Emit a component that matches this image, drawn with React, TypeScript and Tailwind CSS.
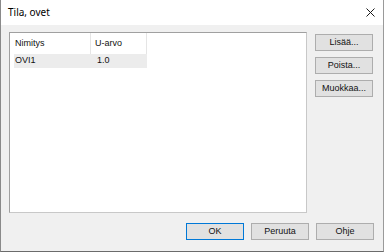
const font = { fontFamily: '"Noto Sans", "Liberation Sans", sans-serif' };
const uiFont = { fontFamily: '"Liberation Sans", Arial, sans-serif' };

function DlgButton({ label, primary }: { label: string; primary?: boolean }) {
  return (
    <button
      className={`w-[58px] h-[17px] flex items-center justify-center bg-[#e1e1e1] text-[9px] text-[#111] leading-none ${
        primary ? "border border-[#0078d7]" : "border border-[#adadad]"
      }`}
      style={uiFont}
    >
      {label}
    </button>
  );
}

export default function App() {
  return (
    <div
      className="w-[384px] h-[252px] flex flex-col border-l border-r border-b border-l-[#8a8a8a] border-r-[#9a9a9a] border-b-[#6b6b6b] bg-[#f0f0f0] overflow-hidden"
      style={font}
    >
      {/* Otsikkopalkki */}
      <div className="h-[25px] bg-white flex items-center justify-between pl-[7px] pr-[7px] shrink-0">
        <span className="text-[10px] text-black">Tila, ovet</span>
        <svg width="9" height="9" viewBox="0 0 9 9" className="mr-[1px]">
          <path d="M0.5 0.5 L8.5 8.5 M8.5 0.5 L0.5 8.5" stroke="#1a1a1a" strokeWidth="1" />
        </svg>
      </div>

      {/* Sisältö */}
      <div className="flex-1 flex flex-col pl-[8px] pr-[9px] pt-[7px] pb-[9px]">
        <div className="flex gap-[8px]">
          <div
            className="w-[298px] h-[181px] bg-white border border-t-[#a0a0a0] border-l-[#a0a0a0] border-r-[#c8c8c8] border-b-[#c8c8c8] pl-[4px]"
            style={uiFont}
          >
            <div className="flex h-[21px] items-center text-[9px] text-[#111]">
              <div className="w-[77px] h-full flex items-center pl-[1px] border-r border-[#e5e5e5]">Nimitys</div>
              <div className="w-[56px] h-full flex items-center pl-[4px] border-r border-[#e5e5e5]">U-arvo</div>
            </div>
            <div className="flex h-[14px] w-[133px] items-center bg-[#ececec] text-[9px] text-[#111]">
              <div className="w-[77px] pl-[1px]">OVI1</div>
              <div className="w-[56px] pl-[6px]">1.0</div>
            </div>
          </div>
          <div className="flex flex-col gap-[6px] mt-[2px]">
            <DlgButton label="Lisää..." />
            <DlgButton label="Poista..." />
            <DlgButton label="Muokkaa..." />
          </div>
        </div>
        <div className="flex justify-end gap-[7px] mt-[10px]">
          <DlgButton label="OK" primary />
          <DlgButton label="Peruuta" />
          <DlgButton label="Ohje" />
        </div>
      </div>
    </div>
  );
}
